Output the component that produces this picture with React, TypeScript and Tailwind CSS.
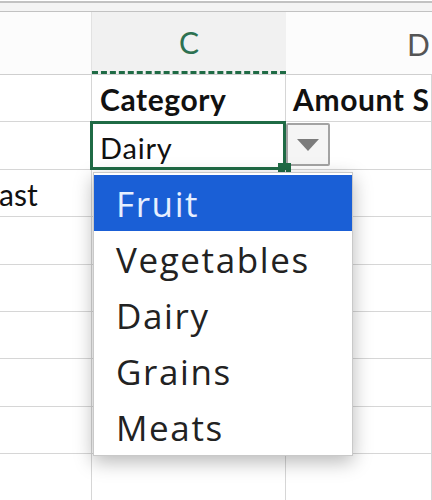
const ITEMS = ["Fruit", "Vegetables", "Dairy", "Grains", "Meats"];

const ROW = "grid grid-cols-[92px_194px_146px] h-[47.4px]";
const CELL = "flex items-end overflow-hidden whitespace-nowrap border-b border-r border-[#d6d6d6] pb-[7px]";

function Row({ b, c, d }: { b?: React.ReactNode; c?: React.ReactNode; d?: React.ReactNode }) {
  return (
    <div className={ROW}>
      <div className={CELL}>{b}</div>
      <div className={`${CELL} relative overflow-visible`}>{c}</div>
      <div className={CELL}>{d}</div>
    </div>
  );
}

export default function App() {
  return (
    <div className="relative h-[500px] w-[432px] overflow-hidden bg-white font-['Lato',sans-serif] text-[#111]">
      {/* sheet top edge */}
      <div className="mt-[1px] h-[11px] border-t-2 border-b border-[#c2c2c2] bg-[#f4f4f4]" />

      {/* column headers */}
      <div className="grid h-[63px] grid-cols-[92px_194px_146px] border-b border-[#cfcfcf]">
        <div className="border-r border-[#e2e2e2] bg-[#fcfcfc]" />
        <div className="flex items-center justify-center border-b-[3px] border-dashed border-[#1f6b45] bg-[#f1f1f1] pt-[2px] text-[30px] text-[#2d7151]">
          C
        </div>
        <div className="flex items-center bg-[#fcfcfc] pl-[121px] pt-[2px] text-[30px] text-[#555]">
          D
        </div>
      </div>

      <Row
        c={<span className="pl-[8px] text-[30px] font-bold leading-none tracking-[0.6px]">Category</span>}
        d={<span className="pl-[7px] text-[30px] font-bold leading-none tracking-[0.6px]">Amount S</span>}
      />

      <div className={ROW}>
        <div className={CELL} />
        <div className={`${CELL} relative overflow-visible`}>
          <span className="pl-[8px] text-[29px] leading-none tracking-[0.8px]">Dairy</span>
          <div className="absolute -left-[2px] -right-[1px] -top-[1px] -bottom-[1px] border-[3px] border-[#1f6b45]" />
          <div className="absolute -bottom-[3px] -right-[6px] h-[9px] w-[13px] bg-[#1f6b45]" />
        </div>
        <div className="flex items-start border-b border-r border-[#d6d6d6] pt-[1px]">
          <div className="flex h-[43px] w-[44px] items-center justify-center rounded-[2px] border-2 border-[#a3a3a3] bg-[#f5f5f5]">
            <svg width="22" height="12" viewBox="0 0 22 12">
              <path d="M0 0H22L11 12Z" fill="#7c7c7c" />
            </svg>
          </div>
        </div>
      </div>

      <Row b={<span className="-ml-[1px] text-[30px] leading-none">ast</span>} />
      <Row />
      <Row />
      <Row />
      <Row />
      <Row />
      <Row />

      {/* validation list */}
      <div className="absolute left-[93px] top-[172px] w-[260px] border border-[#c9c9c9] bg-white pt-[2px] font-['Open_Sans',sans-serif] shadow-[0_6px_18px_rgba(0,0,0,0.28)]">
        {ITEMS.map((item, i) => (
          <div
            key={item}
            className={`flex h-[56px] items-center pl-[22px] text-[35px] leading-none tracking-[1.6px] ${
              i === 0 ? "bg-[#1a5fd6] text-[#e6efff]" : "text-[#222]"
            }`}
          >
            {item}
          </div>
        ))}
      </div>
    </div>
  );
}
